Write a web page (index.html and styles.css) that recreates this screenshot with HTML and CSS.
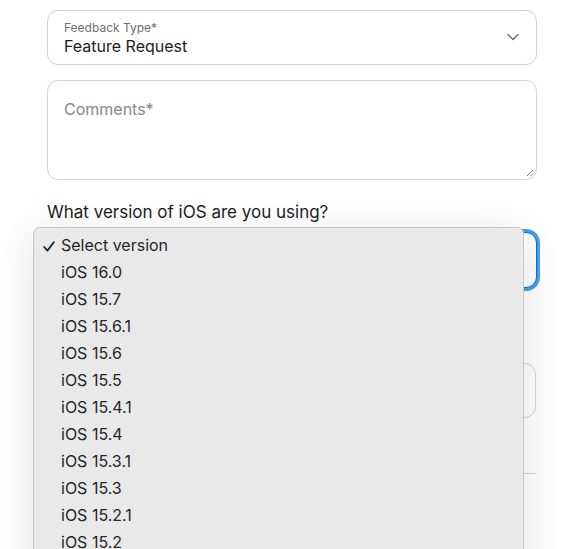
FILE: index.html
```html
<!DOCTYPE html>
<html>
<head>
<meta charset="utf-8">
<link rel="stylesheet" href="styles.css">
</head>
<body>
<div class="page">
  <form class="form">
    <div class="field select-field">
      <div class="field-text">
        <span class="field-label">Feedback Type*</span>
        <span class="field-value">Feature Request</span>
      </div>
      <svg class="chevron" width="12" height="8" viewBox="0 0 12 8"><path d="M1 1.5 L6 6.5 L11 1.5" fill="none" stroke="#6e6e73" stroke-width="1.4" stroke-linecap="round" stroke-linejoin="round"/></svg>
    </div>
    <div class="field textarea-field">
      <span class="placeholder">Comments*</span>
      <svg class="grip" width="9" height="9" viewBox="0 0 9 9"><path d="M8 2 L2 8 M8 5.5 L5.5 8" stroke="#777" stroke-width="1" fill="none"/></svg>
    </div>
    <div class="question">What version of iOS are you using?</div>
    <div class="field focus-field"></div>
    <div class="spacer"></div>
    <div class="field plain-field"></div>
    <div class="rule"></div>
  </form>
  <ul class="menu">
    <li class="item checked"><svg class="check" width="12" height="11" viewBox="0 0 12 11"><path d="M1.2 6 L4.4 9.6 L10.8 1.2" fill="none" stroke="#222" stroke-width="1.8" stroke-linecap="round" stroke-linejoin="round"/></svg>Select version</li>
    <li class="item">iOS 16.0</li>
    <li class="item">iOS 15.7</li>
    <li class="item">iOS 15.6.1</li>
    <li class="item">iOS 15.6</li>
    <li class="item">iOS 15.5</li>
    <li class="item">iOS 15.4.1</li>
    <li class="item">iOS 15.4</li>
    <li class="item">iOS 15.3.1</li>
    <li class="item">iOS 15.3</li>
    <li class="item">iOS 15.2.1</li>
    <li class="item">iOS 15.2</li>
  </ul>
</div>
</body>
</html>
```

FILE: styles.css
```css
html, body {
  margin: 0;
  padding: 0;
  background: #ffffff;
  overflow: hidden;
}
body {
  font-family: Inter, "Liberation Sans", sans-serif;
  color: #1d1d1f;
}
.page {
  position: relative;
  width: 563px;
  height: 549px;
  overflow: hidden;
}
.form {
  display: flex;
  flex-direction: column;
  width: 490px;
  padding: 10px 0 0 47px;
  margin: 0;
}
.field {
  box-sizing: border-box;
  border: 1px solid #d2d2d7;
  border-radius: 11px;
  background: #fff;
}
.select-field {
  height: 55px;
  display: flex;
  align-items: center;
  justify-content: space-between;
  padding: 0 16px 0 16px;
}
.field-text {
  display: flex;
  flex-direction: column;
  padding-top: 1px;
}
.field-label {
  font-size: 12px;
  line-height: 16px;
  color: #6e6e73;
}
.field-value {
  font-size: 16px;
  line-height: 20px;
  color: #1d1d1f;
}
.chevron {
  margin-right: 1px;
  margin-top: -1px;
}
.textarea-field {
  position: relative;
  margin-top: 15px;
  height: 100px;
  padding: 18px 16px;
}
.placeholder {
  font-size: 16px;
  line-height: 20px;
  color: #86868b;
}
.grip {
  position: absolute;
  right: 2px;
  bottom: 2px;
}
.question {
  margin-top: 22px;
  font-size: 17px;
  line-height: 20px;
  color: #1d1d1f;
}
.focus-field {
  margin-top: 10px;
  height: 56px;
  border-color: #0071e3;
  box-shadow: 0 0 0 3px #4aa0ec;
}
.spacer {
  height: 75px;
}
.plain-field {
  height: 55px;
  width: 489px;
}
.rule {
  margin-top: 55px;
  width: 489px;
  height: 1px;
  background: #d2d2d7;
}
.menu {
  position: absolute;
  left: 33px;
  top: 227px;
  width: 491px;
  height: 400px;
  box-sizing: border-box;
  margin: 0;
  padding: 4px 0 0 0;
  list-style: none;
  background: #e9e9e9;
  border: 1px solid #c8c8c8;
  border-radius: 7px;
  box-shadow: 0 8px 40px rgba(0, 0, 0, 0.12);
}
.item {
  position: relative;
  height: 27px;
  line-height: 27px;
  padding-left: 27px;
  font-size: 16px;
  color: #262626;
}
.check {
  position: absolute;
  left: 9px;
  top: 9px;
}
```
